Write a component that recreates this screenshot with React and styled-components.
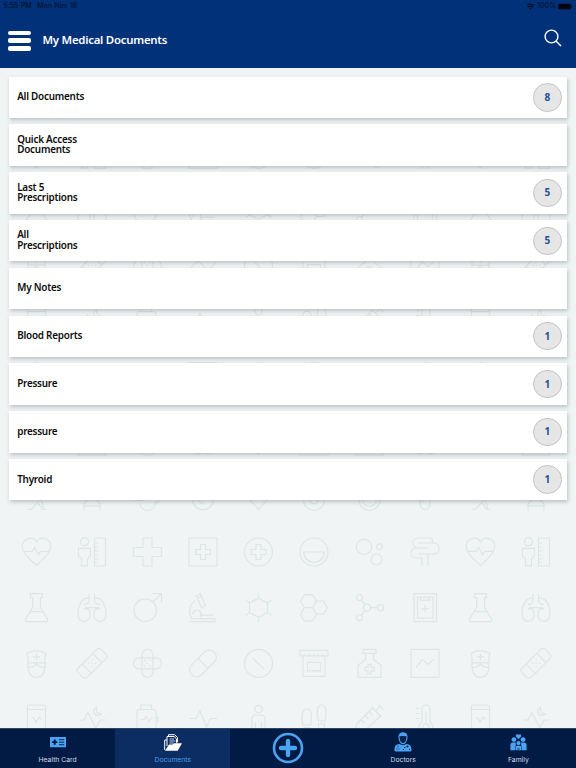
import React from "react";
import styled, { createGlobalStyle, css } from "styled-components";

const GlobalStyle = createGlobalStyle`
  * {
    box-sizing: border-box;
  }

  body {
    margin: 0;
    background: #f0f4f5;
  }
`;

const Screen = styled.div`
  position: relative;
  width: 576px;
  height: 768px;
  overflow: hidden;
  display: flex;
  flex-direction: column;
  background: #f0f4f5;
  font-family: "Noto Sans", "Open Sans", sans-serif;
`;

const Header = styled.header`
  height: 67.7px;
  flex-shrink: 0;
  background: #003179;
  z-index: 1;
`;

const StatusBar = styled.div`
  height: 12px;
  padding: 0 3px 0 3.5px;
  display: flex;
  align-items: center;
  justify-content: space-between;
  color: #050b18;
  font-family: Inter, sans-serif;
  font-size: 7px;
  line-height: 12px;
`;

const StatusGroup = styled.div`
  display: flex;
  align-items: center;
  gap: ${(props) => props.$gap}px;
  letter-spacing: ${(props) => props.$spacing || 0}px;
`;

const TitleBar = styled.div`
  height: 55px;
  padding: 2px 14px 0 7px;
  display: flex;
  align-items: center;
`;

const MenuButton = styled.button`
  width: 24px;
  height: 20px;
  padding: 0;
  border: none;
  background: none;
  display: flex;
  flex-direction: column;
  justify-content: space-between;
`;

const MenuLine = styled.span`
  width: 23px;
  height: 4.2px;
  margin-left: 0.5px;
  border-radius: 2px;
  background: #fff;
`;

const Title = styled.h1`
  flex: 1;
  margin: 0 0 2px 11.5px;
  color: #fff;
  font-size: 11.4px;
  font-weight: 600;
  line-height: 16px;
  letter-spacing: -0.24px;
`;

const SearchButton = styled.button`
  width: 18px;
  height: 18px;
  margin-bottom: 5px;
  padding: 0;
  border: none;
  background: none;
  display: flex;
`;

const Wallpaper = styled.svg`
  position: absolute;
  inset: 0;
  fill: none;
  stroke: #dfe4e5;
  stroke-width: 1.2;
`;

const List = styled.main`
  flex: 1;
  padding: 9px 9px 0;
  display: flex;
  flex-direction: column;
  gap: 6.4px;
  z-index: 1;
`;

const Card = styled.div`
  height: 41.4px;
  flex-shrink: 0;
  padding: 0 5.5px 0 8.2px;
  display: flex;
  align-items: center;
  justify-content: space-between;
  background: #fff;
  box-shadow: 1px 1.5px 4px rgba(70, 85, 90, 0.32);
`;

const CardLabel = styled.span`
  padding-bottom: 1.4px;
  color: #0c0c0c;
  font-size: 9.9px;
  font-weight: 600;
  line-height: 10.7px;
  letter-spacing: -0.22px;
  white-space: pre-line;
`;

const Badge = styled.span`
  width: 28.4px;
  height: 28.4px;
  padding-bottom: 1px;
  border: 1px solid #c3c4c5;
  border-radius: 50%;
  background: #e6e6e6;
  color: #1d5296;
  display: flex;
  align-items: center;
  justify-content: center;
  font-size: 10px;
  font-weight: 700;
  line-height: 10px;
`;

const TabBar = styled.nav`
  height: 40px;
  flex-shrink: 0;
  display: grid;
  grid-template-columns: repeat(5, 1fr);
  background: #021b45;
  border-top: 0.5px solid #2c4a68;
  z-index: 1;
`;

const Tab = styled.a`
  display: flex;
  flex-direction: column;
  align-items: center;
  justify-content: flex-end;
  padding-bottom: 4px;
  color: #d5dbe4;
  font-family: Inter, sans-serif;
  font-size: 6.8px;
  line-height: 9px;

  ${(props) =>
    props.$active &&
    css`
      background: #0c2d62;
      color: #469ce4;
    `}

  ${(props) =>
    props.$center &&
    css`
      justify-content: center;
      padding-bottom: 1px;
    `}
`;

const TabIcon = styled.svg`
  display: block;
  margin-bottom: ${(props) => props.$gap}px;
`;

// every drawing sits in a 30x30 box
const glyphs = {
  heart: (
    <path d="M15 28.5 C10 24 .8 17 .8 9.5 C.8 1 11.5-1.5 15 5 C18.5-1.5 29.2 1 29.2 9.5 C29.2 17 20 24 15 28.5ZM2.5 14.3h8.5l2-4 4 7.500 2-3.500h8.500" />
  ),
  ruler: (
    <path d="M11.500 4.700a4 4 0 1 1-8 0a4 4 0 1 1 8 0M1.500 11.300h12v7.500l-3 3v7h-6v-7l-3-3zM17.500 1h11v28h-11zM17.500 6h3.500M17.500 10h3M17.500 14h4M17.500 18h3M17.500 22h4M17.500 25.500h3" />
  ),
  cross: <path d="M10.500 1h9v9.500h9.500v9h-9.500v9.500h-9v-9.500h-9.500v-9h9.500z" />,
  crossBox: (
    <path d="M1 1h28v28h-28zM12.500 7.500h5v5h5v5h-5v5h-5v-5h-5v-5h5z" />
  ),
  crossCircle: (
    <path d="M29 15a14 14 0 1 1-28 0a14 14 0 1 1 28 0M12.500 7.500h5v5h5v5h-5v5h-5v-5h-5v-5h5z" />
  ),
  dish: (
    <path d="M29 15a14 14 0 1 1-28 0a14 14 0 1 1 28 0M4.700 15h20.600a10.300 10.300 0 0 1-20.600 0z" />
  ),
  bubbles: (
    <>
      <circle cx="9.500" cy="10" r="7.700" />
      <circle cx="25" cy="9.700" r="2.800" />
      <circle cx="22" cy="22.500" r="5.500" />
    </>
  ),
  intestine: (
    <path d="M8.500 6H18M22.500 5.500V4q0-3-3-3H8C1.500 1 1.500 11 8 11h10M8.500 6h15c7.500 0 7.500 11 0 11H8.500M8 11H6C-1 11-1 21 6 21h6v8M18 29V17" />
  ),
  flask: (
    <path d="M9 1h12v4h-2v9.500L26 26.500q.5 2.500-1.500 2.500H5.500q-2 0-1.500-2.500L11.200 14.500V5H9zM9 19h12" />
  ),
  lungs: (
    <path d="M12 1v7q0 3-5 4M17.500 1v7q0 3 5 4M12 5.500C5 4 1 13 1 20.500C1 32 13 30 13 23v-3q0-5-6-4M17.500 5.500C25 4 29 13 29 20.500C29 32 17 30 17 23v-3q0-5 6-4M8 15h14" />
  ),
  male: (
    <path d="M24 17.500a11.300 11.300 0 1 1-22.600 0a11.300 11.300 0 1 1 22.600 0M20.500 9.500L29 1M20 1h9v9" />
  ),
  microscope: (
    <path d="M8.500 3l4-2 5 12-4 2zM10.500 5l4-2M7 8C1 13 0 20 4 26M2 26h25v3H1M5 22c0-6 8-6 8 0v3M12 22.500h14" />
  ),
  hexagon: (
    <path d="M15 5.500l9 4.700v9.600l-9 4.700-9-4.700v-9.600zM15 1v4.500M15 24.500V29M2 7.500l4 2.500M28 7.500l-4 2.500M2 22.500l4-2.500M28 22.500l-4-2.500" />
  ),
  honeycomb: (
    <path d="M5.500 2h8l4 6.500-4 6.500h-8l-4-6.500zM5.500 15h8l4 6.500-4 7h-8l-4-7zM17.500 8.500h7l4 6.500-4 6.500h-7l-4-6.500z" />
  ),
  molecule: (
    <>
      <circle cx="5" cy="5" r="3" />
      <circle cx="5" cy="25" r="3" />
      <circle cx="12.500" cy="15" r="3.500" />
      <circle cx="26" cy="15" r="3" />
      <path d="M7 7.500l3.500 4.500M7 22.500l3.500-4.500M16 15h7" />
    </>
  ),
  clipboard: (
    <path d="M4 1h22.500v28H4zM7.500 4.500h15.500v21H7.500zM10.500 4.500v3h9v-3M15 12.500v7M11.500 16h7" />
  ),
  nurse: (
    <path d="M5.500 5q9.500-5.500 19 0l-1 4v7q0 13-8.500 13t-8.500-13V9zM6.500 14.500h17M15 5v7M11.500 8.500h7M7 19q6 0 8-4 2 4 8 4" />
  ),
  bandage: (
    <g transform="rotate(-45 15 15)">
      <rect x="-1.500" y="8.500" width="33" height="13" rx="3.500" />
      <path d="M7.500 8.500v13M22.500 8.500v13M12 12.500h1.500M17 12.500h1.500M12 17.500h1.500M17 17.500h1.500M14.500 15h1.500" />
    </g>
  ),
  bandageCross: (
    <>
      <rect x="9.500" y="1" width="11" height="28" rx="5.500" />
      <path d="M9.500 9.500H6.500a5.500 5.500 0 0 0 0 11h3M20.500 9.500h3a5.500 5.500 0 0 1 0 11h-3M9.500 9.500h11M9.500 20.500h11M11.500 12h1.500M17 12h1.500M14 15h1.500M11.500 18h1.500M17 18h1.500" />
    </>
  ),
  pill: (
    <g transform="rotate(-45 15 15)">
      <rect x="-1" y="8" width="32" height="14" rx="7" />
      <path d="M15 8v14" />
    </g>
  ),
  tablet: (
    <path d="M29 15a14 14 0 1 1-28 0a14 14 0 1 1 28 0M9 9.500l12 11.500" />
  ),
  jar: (
    <path d="M1 2h28v5.500H1zM4 7.500v20.500h22V7.500M8.500 14h13v8.500h-13zM6 5.500v2M10.500 5.500v2M15 5.500v2M19.500 5.500v2M24 5.500v2" />
  ),
  bottle: (
    <path d="M8.500 1h13v4h-13zM11 5v6L3.500 17v12h23V17L19 11V5M13.500 16h3v3h3v3.500h-3v3h-3v-3h-3V19h3z" />
  ),
  chart: <path d="M1 1h28v28H1zM6 19l6.500-8 5.500 5 6-5" />,
  phone: (
    <path d="M8 1h14q2 0 2 2v26H6V3q0-2 2-2zM6 5.500h18M10 14h2.500l2 4 3.500-5 2 2.500" />
  ),
  sleep: (
    <path d="M2 16h5l3.800-7.500 8 15.500 4.200-8h5.500M19.500 3.500c-6 3-2 10.500 5.500 6.500-4 0-6-2-5.500-6.500z" />
  ),
  battery: (
    <path d="M8.500 5.500V1h10.500v4.500M7 5.500h14q2.500 0 2.500 2.500v21H4.500V8q0-2.500 2.500-2.500zM23.500 13h2v5h-2M8 15.500h3.500l2-3 3 5 2-3h2.500" />
  ),
  pulse: <path d="M1.500 14.500h6.500l4-7.500 6.500 16 4-8.500h6.500" />,
  person: (
    <path d="M18.800 5a3.700 3.700 0 1 1-7.400 0a3.700 3.700 0 1 1 7.400 0M8.500 29V15q0-4 4-4h5q4 0 4 4v14M12 18v11M18 18v11" />
  ),
  feet: (
    <path d="M4 21c-2-7-1.500-16 4-16s5 9 3.500 16zM19.500 17c-2-7-2-16 3-16s5.500 9 3.500 16zM5 23.500h6v6H5zM19.500 20h6v6h-6z" />
  ),
  syringe: (
    <path d="M17 3l10 10M24 1l5 5M21 7l4-4M18 4L2 20l-1 9 9-2L26 12M7 16l3 3M11 12l3 3M15 8l3 3" />
  ),
  thermo: (
    <path d="M12 5q0-4 4-4t4 4v13q3 2 3 6 0 5-7 5t-7-5q0-4 3-6zM16 8v11M19 23a3 3 0 1 1-6 0a3 3 0 1 1 6 0M6 4.500h3.500M6 9.500h3.500M6 14.500h3.500" />
  ),
  chromosome: (
    <path d="M8 2c0 14 14 12 14 25M18 19L10 28H6M17 22l4 6h4" />
  ),
  crutch: <path d="M7 29V23q2-5 8-5t8 5v6M7 24.500h15.500" />,
  stetho: (
    <path d="M23 20a8 8 0 0 1-16 2M2 19h10M22 22q4 0 5-5" />
  ),
  ring: (
    <path d="M25.500 18a10.500 10.500 0 1 1-21 0a10.500 10.500 0 1 1 21 0M16 22c-4 1-6-3-5-5" />
  ),
  diamond: <path d="M5 17l10 11 10-11" />,
  eye: (
    <>
      <circle cx="15" cy="18.500" r="10.500" />
      <circle cx="15" cy="18.500" r="4" />
    </>
  ),
  rings: (
    <>
      <circle cx="15" cy="18.500" r="10.500" />
      <circle cx="15" cy="18" r="7" />
    </>
  ),
  capsule: <path d="M10 17v6a5 5 0 0 0 10 0v-6M10 20h5" />,
  box: <path d="M1 1h28v28H1z" />,
  disc: <circle cx="15" cy="15" r="14" />,
  peak: <path d="M11 9L15 1l4 8" />,
  kidneys: (
    <path d="M14 21c2 8-8 10-10 2M16 21c-2 8 8 10 10 2" />
  ),
};

const hearts = ["heart", "ruler", "cross", "crossBox", "crossCircle", "dish", "bubbles", "intestine"];
const flasks = ["flask", "lungs", "male", "microscope", "hexagon", "honeycomb", "molecule", "clipboard"];
const nurses = ["nurse", "bandage", "bandageCross", "pill", "tablet", "jar", "bottle", "chart"];
const phones = ["phone", "sleep", "battery", "pulse", "person", "feet", "syringe", "thermo"];

const wallpaperRows = [
  { y: 154.3, icons: hearts },
  { y: 209.9, icons: flasks },
  { y: 265.6, icons: nurses },
  { y: 321.2, icons: phones },
  { y: 376.6, icons: ["peak", null, null, "box", "peak", "disc", null, "peak"] },
  { y: 441, icons: [null, "box", "disc", "kidneys", "diamond", "box", "box", "kidneys"] },
  { y: 496.3, icons: ["chromosome", "crutch", "stetho", "ring", "diamond", "eye", "rings", "capsule"] },
  { y: 552, icons: hearts },
  { y: 607.7, icons: flasks },
  { y: 663.4, icons: nurses },
  { y: 719, icons: phones },
];

const documents = [
  { label: "All Documents", count: 8 },
  { label: "Quick Access\nDocuments" },
  { label: "Last 5\nPrescriptions", count: 5 },
  { label: "All\nPrescriptions", count: 5 },
  { label: "My Notes" },
  { label: "Blood Reports", count: 1 },
  { label: "Pressure", count: 1 },
  { label: "pressure", count: 1 },
  { label: "Thyroid", count: 1 },
];

function MedicalWallpaper() {
  return (
    <Wallpaper width="576" height="768" viewBox="0 0 576 768">
      {wallpaperRows.map((row) =>
        Array.from({ length: 10 }, (_, i) => (
          <g
            key={`${row.y}-${i}`}
            transform={`translate(${21.5 + i * 55.5} ${row.y - 15})`}
          >
            {glyphs[row.icons[i % 8]]}
          </g>
        ))
      )}
    </Wallpaper>
  );
}

function WifiIcon() {
  return (
    <svg width="9" height="7" viewBox="0 0 9 7" fill="none" stroke="#050b18">
      <path d="M.7 2.600q3.800-3.200 7.600 0M2 4.200q2.500-2 5 0" strokeWidth="1.150" />
      <path d="M3.300 5.200h2.400L4.500 6.600z" fill="#050b18" stroke="none" />
    </svg>
  );
}

function BatteryIcon() {
  return (
    <svg width="15" height="7" viewBox="0 0 15 7">
      <rect x="0.200" y="0.700" width="12.800" height="5.600" rx="1.200" fill="#02050b" />
      <path d="M13.700 2.300q1.200 1.200 0 2.400z" fill="#02050b" />
    </svg>
  );
}

function HealthCardIcon() {
  return (
    <TabIcon $gap={7} width="16" height="11" viewBox="0 0 16 11">
      <rect width="16" height="10.300" rx="0.500" fill="#4ba3f2" />
      <path
        d="M4.700 2.500v5.200M2.100 5.100h5.200"
        stroke="#021b45"
        strokeWidth="1.900"
      />
      <path d="M9 2.700h5.200M9 5.200h5.200M9 7.700h5.200" stroke="#021b45" strokeWidth="0.900" />
    </TabIcon>
  );
}

function FolderIcon() {
  return (
    <TabIcon $gap={4} width="18" height="17" viewBox="0 0 18 17" fill="none">
      <path d="M.7 16V6h2.200M3 12V2.500h7l2.500 2.300v4M4.500 2.500V.7h6l3 2.700v5" stroke="#fff" strokeWidth="1" />
      <path d="M5.500 5h4.500M5.500 7h6M5.500 9h4" stroke="#d7e0ee" strokeWidth="0.900" />
      <path d="M1 16.700L5 10.500h3.500l1.500-1.200h8L13.700 16.700z" fill="#fff" />
    </TabIcon>
  );
}

function AddIcon() {
  return (
    <svg width="32" height="32" viewBox="0 0 32 32" fill="none" stroke="#4ba3f2">
      <circle cx="16" cy="16" r="14" strokeWidth="2.600" />
      <path d="M16 9v14M9 16h14" strokeWidth="4.400" strokeLinecap="round" />
    </svg>
  );
}

function DoctorIcon() {
  return (
    <TabIcon $gap={3} width="18" height="20" viewBox="0 0 18 20">
      <path d="M4.500 5C4-1.500 14-1.500 13.500 5c0 4-2 7.200-4.500 7.200S4.500 9 4.500 5z" fill="#4ba3f2" />
      <path d="M5.500 4.300q3.500-.8 7 0c0 4-1.500 6.800-3.500 6.800S5.500 8.300 5.500 4.300z" fill="#06244f" />
      <path d="M.5 18.500c0-5 1.500-6 5-6.500q3.500 2.200 7 0c3.500.5 5 1.500 5 6.500q-.3 1-1.500 1H2q-1.200 0-1.500-1z" fill="#4ba3f2" />
      <circle cx="13.500" cy="14.500" r="1" fill="#021b45" />
      <path d="M4 13v2.500M3 18v-1.500q1-2 2 0V18" stroke="#1e568f" strokeWidth="0.700" fill="none" />
      <path d="M10 15.500h1.500M9 17.500h1M15 17.500h1" stroke="#021b45" strokeWidth="0.900" />
    </TabIcon>
  );
}

function FamilyIcon() {
  return (
    <TabIcon $gap={4.5} width="17" height="17" viewBox="0 0 17 17" fill="#4ba3f2">
      <path d="M8.500 5.200L5.900 2.600C5.200-.2 8-.3 8.500 1c.5-1.300 3.300-1.200 2.600 1.600z" />
      <circle cx="3.900" cy="5.600" r="2.400" />
      <circle cx="13.100" cy="5.600" r="2.400" />
      <circle cx="8.500" cy="9.100" r="2.100" />
      <path d="M.4 16.200V11q0-2.500 2.500-2.500h2.900v3.300q-.8.700-.8 2v2.400zM16.600 16.200V11q0-2.500-2.500-2.500h-2.900v3.300q.8.700.8 2v2.400z" />
      <path d="M5.500 16.200v-3q0-1.500 1.500-1.500h3q1.500 0 1.500 1.500v3z" />
      <path d="M7 15h3" stroke="#021b45" strokeWidth="0.700" />
    </TabIcon>
  );
}

export default function App() {
  return (
    <>
      <GlobalStyle />
      <Screen>
        <MedicalWallpaper />
        <Header>
          <StatusBar>
            <StatusGroup $gap={5.5} $spacing={0.1}>
              <span>5:55 PM</span>
              <span>Mon Nov 18</span>
            </StatusGroup>
            <StatusGroup $gap={1.8} $spacing={0.1}>
              <WifiIcon />
              <span>100%</span>
              <BatteryIcon />
            </StatusGroup>
          </StatusBar>
          <TitleBar>
            <MenuButton aria-label="Menu">
              <MenuLine />
              <MenuLine />
              <MenuLine />
            </MenuButton>
            <Title>My Medical Documents</Title>
            <SearchButton aria-label="Search">
              <svg width="18" height="18" viewBox="0 0 18 18" fill="none" stroke="#fff">
                <circle cx="7.500" cy="7.500" r="6.400" strokeWidth="1.400" />
                <path d="M12 12l5 5" strokeWidth="1.500" />
              </svg>
            </SearchButton>
          </TitleBar>
        </Header>
        <List>
          {documents.map((item) => (
            <Card key={item.label}>
              <CardLabel>{item.label}</CardLabel>
              {item.count && <Badge>{item.count}</Badge>}
            </Card>
          ))}
        </List>
        <TabBar>
          <Tab>
            <HealthCardIcon />
            Health Card
          </Tab>
          <Tab $active>
            <FolderIcon />
            Documents
          </Tab>
          <Tab $center>
            <AddIcon />
          </Tab>
          <Tab>
            <DoctorIcon />
            Doctors
          </Tab>
          <Tab>
            <FamilyIcon />
            Family
          </Tab>
        </TabBar>
      </Screen>
    </>
  );
}
